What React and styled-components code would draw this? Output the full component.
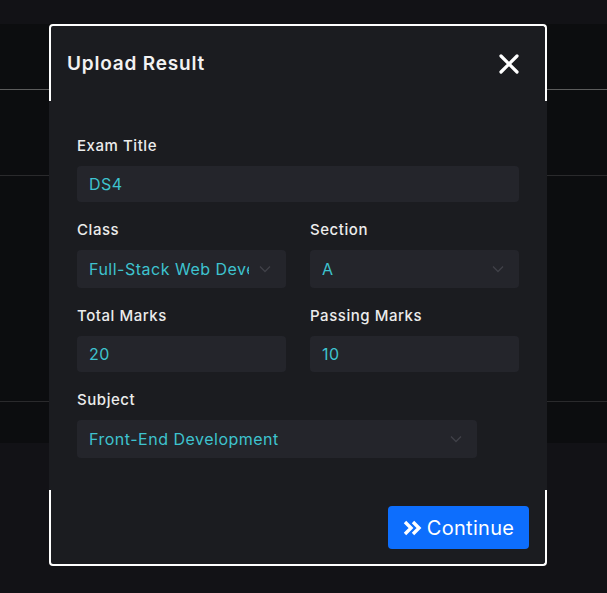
import React from 'react';
import styled, { createGlobalStyle } from 'styled-components';

const Global = createGlobalStyle`
  html, body { margin: 0; padding: 0; }
  body {
    background: #121216;
    font-family: Inter, "Open Sans", sans-serif;
    width: 607px;
    height: 593px;
    overflow: hidden;
  }
`;

const Page = styled.div`
  position: relative;
  width: 607px;
  height: 593px;
  background: #121216;
  padding-top: 24px;
  box-sizing: border-box;
`;

const Backdrop = styled.div`
  height: 419px;
  background: #0c0d0f;
  display: flex;
  flex-direction: column;
`;

const Row = styled.div`
  height: ${p => p.h}px;
  border-bottom: 1px solid ${p => p.line || 'transparent'};
  flex-shrink: 0;
`;

const Modal = styled.div`
  position: absolute;
  left: 49px;
  top: 24px;
  width: 498px;
  display: flex;
  flex-direction: column;
  color: #ececec;
`;

const Header = styled.div`
  height: 77px;
  box-sizing: border-box;
  background: #1b1c20;
  border: 2px solid #ffffff;
  border-bottom: none;
  border-radius: 4px 4px 0 0;
  display: flex;
  align-items: center;
  justify-content: space-between;
  padding: 0 26px 0 16px;
`;

const Title = styled.h2`
  margin: 0;
  font-size: 19px;
  font-weight: 600;
  letter-spacing: 0.8px;
  color: #f2f2f2;
`;

const Close = styled.button`
  background: none;
  border: none;
  padding: 0;
  display: flex;
  cursor: pointer;
`;

const Body = styled.div`
  background: #1b1c20;
  padding: 34px 28px 32px;
  display: grid;
  grid-template-columns: 209px 209px;
  column-gap: 24px;
  row-gap: 17px;
`;

const Field = styled.div`
  grid-column: ${p => (p.full ? '1 / -1' : 'auto')};
  display: flex;
  flex-direction: column;
  gap: 10px;
`;

const Label = styled.label`
  font-size: 15px;
  line-height: 21px;
  font-weight: 500;
  letter-spacing: 0.55px;
  color: #ececec;
`;

const Input = styled.div`
  height: ${p => (p.select ? 38 : 36)}px;
  width: ${p => (p.w ? p.w + 'px' : 'auto')};
  box-sizing: border-box;
  background: #24252b;
  border-radius: 4px;
  display: flex;
  align-items: center;
  padding: 0 15px 0 12px;
  gap: 10px;
  color: #3ec3cf;
  font-size: 16px;
  letter-spacing: 0.5px;
`;

const Value = styled.span`
  flex: 1;
  white-space: nowrap;
  overflow: hidden;
`;

const Footer = styled.div`
  height: 76px;
  box-sizing: border-box;
  background: #1b1c20;
  border: 2px solid #ffffff;
  border-top: none;
  border-radius: 0 0 4px 4px;
  display: flex;
  justify-content: flex-end;
  padding: 16px 16px 0 0;
`;

const Button = styled.button`
  height: 43px;
  width: 141px;
  background: #0d6efd;
  border: none;
  border-radius: 4px;
  color: #ffffff;
  font-family: inherit;
  font-size: 20px;
  letter-spacing: 0.3px;
  display: flex;
  align-items: center;
  justify-content: center;
  gap: 4px;
  cursor: pointer;
`;

const Chevron = () => (
  <svg width="12" height="8" viewBox="0 0 12 8" fill="none">
    <path d="M1 1.5l5 5 5-5" stroke="#404148" strokeWidth="1.3" />
  </svg>
);

const fields = [
  { label: 'Exam Title', value: 'DS4', full: true },
  { label: 'Class', value: 'Full-Stack Web Development', select: true },
  { label: 'Section', value: 'A', select: true },
  { label: 'Total Marks', value: '20' },
  { label: 'Passing Marks', value: '10' },
  { label: 'Subject', value: 'Front-End Development', select: true, full: true, w: 400 },
];

export default function App() {
  return (
    <Page>
      <Global />
      <Backdrop>
        <Row h={65} line="#5c5c5c" />
        <Row h={85} line="#2a2a2c" />
        <Row h={225} line="#2a2a2c" />
      </Backdrop>
      <Modal>
        <Header>
          <Title>Upload Result</Title>
          <Close aria-label="close">
            <svg width="20" height="20" viewBox="0 0 20 20">
              <path d="M2 2l16 16M18 2L2 18" stroke="#ffffff" strokeWidth="3.2" strokeLinecap="round" />
            </svg>
          </Close>
        </Header>
        <Body>
          {fields.map(f => (
            <Field key={f.label} full={f.full}>
              <Label>{f.label}</Label>
              <Input select={f.select} w={f.w}>
                <Value>{f.value}</Value>
                {f.select && <Chevron />}
              </Input>
            </Field>
          ))}
        </Body>
        <Footer>
          <Button>
            <svg width="20" height="18" viewBox="0 0 20 18">
              <path d="M2 3l6 6-6 6M10 3l6 6-6 6" stroke="#ffffff" strokeWidth="3.4" fill="none" />
            </svg>
            Continue
          </Button>
        </Footer>
      </Modal>
    </Page>
  );
}
